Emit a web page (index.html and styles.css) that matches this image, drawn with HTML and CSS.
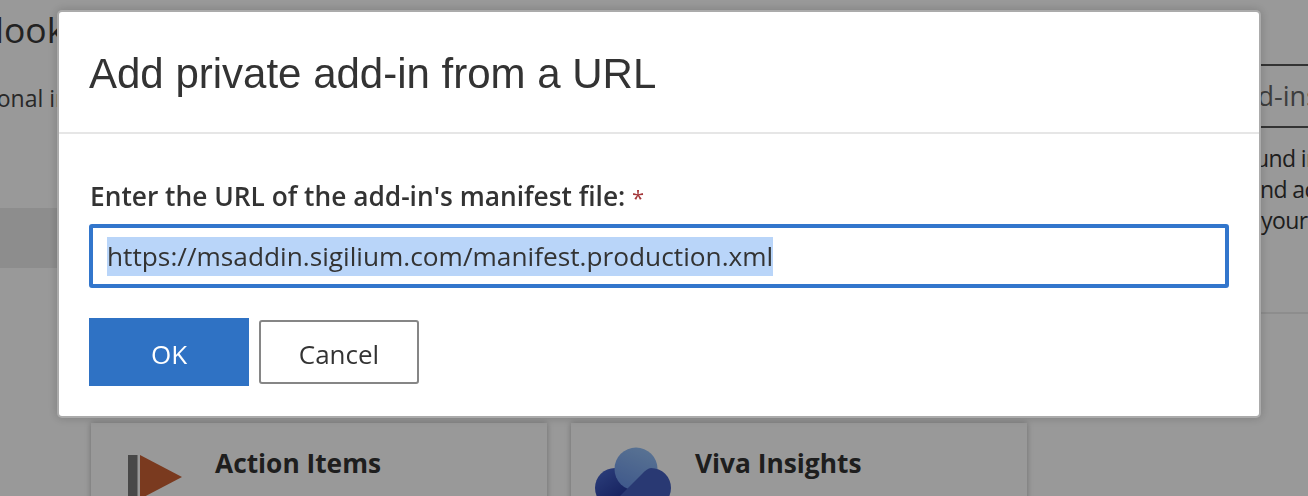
FILE: index.html
```html
<!DOCTYPE html>
<html lang="en">
<head>
<meta charset="utf-8">
<title>Add private add-in from a URL</title>
<link rel="stylesheet" href="styles.css">
</head>
<body>
<div class="page">
  <div class="top">
    <div class="intro">
      <h1 class="page-title">Outlook</h1>
      <p class="page-sub">additional info</p>
      <div class="band"></div>
    </div>
    <div class="side">
      <div class="tab">Add-ins</div>
      <p class="side-text"><span class="line line-a">und in</span><span class="line line-b">nd ac</span><span class="line line-c">your</span></p>
      <div class="side-rule"></div>
    </div>
  </div>
  <div class="cards">
    <div class="card">
      <svg class="card-icon" width="56" height="44" viewBox="0 0 56 44"><rect x="0" y="0" width="9.5" height="44" fill="#787878"/><path d="M12 0 L54 22 L12 44Z" fill="#cb6135"/></svg>
      <h2 class="card-title">Action Items</h2>
    </div>
    <div class="card">
      <svg class="card-icon" width="78" height="50" viewBox="0 0 78 50"><defs><linearGradient id="big" x1="0.7" y1="0" x2="0.3" y2="1"><stop offset="0" stop-color="#94bff5"/><stop offset="1" stop-color="#6a94e8"/></linearGradient><linearGradient id="left" x1="0.1" y1="0" x2="0.8" y2="1"><stop offset="0" stop-color="#4a69ce"/><stop offset="1" stop-color="#1a2a90"/></linearGradient></defs><circle cx="20" cy="41" r="20" fill="url(#left)"/><circle cx="41" cy="22" r="21.5" fill="url(#big)"/><path d="M24 50 L47 27 Q52 21.5 56 21 A20 20 0 0 1 56 61 L24 61Z" fill="#4560c0"/></svg>
      <h2 class="card-title">Viva Insights</h2>
    </div>
  </div>
</div>
<div class="overlay"></div>
<div class="dialog" role="dialog">
  <header class="dialog-head"><h2 class="dialog-title">Add private add-in from a URL</h2></header>
  <div class="dialog-body">
    <label class="field-label" for="url">Enter the URL of the add-in's manifest file: <span class="req">*</span></label>
    <div class="field"><span class="selected" id="url">https://msaddin.sigilium.com/manifest.production.xml</span></div>
    <div class="actions">
      <button class="btn btn-primary" type="button">OK</button>
      <button class="btn btn-default" type="button">Cancel</button>
    </div>
  </div>
</div>
</body>
</html>
```
FILE: styles.css
```css
* { box-sizing: border-box; }
html, body { margin: 0; height: 496px; overflow: hidden; background: #fff; }
body { font-family: "Open Sans", "Noto Sans", sans-serif; color: #333; }
.page { width: 1308px; height: 496px; overflow: hidden; }
.top { display: flex; justify-content: space-between; height: 400px; }
.intro { width: 400px; margin-left: -67px; padding-top: 3px; }
.page-title { margin: 0; font-size: 35.5px; line-height: 52px; font-weight: 400; color: #3a3a3a; }
.page-sub { margin: 27px 0 0; font-size: 23px; line-height: 32px; white-space: nowrap; color: #444; text-indent: 3px; }
.band { margin-top: 94px; height: 60px; background: #ececec; }
.side { width: 230px; padding-top: 64px; font-size: 23px; color: #333; }
.tab { height: 64px; border-top: 2px solid #555; border-bottom: 2px solid #555; line-height: 60px; font-size: 27px; color: #666; padding-left: 146px; white-space: nowrap; overflow: hidden; }
.side-text { margin: 15px 0 0; line-height: 31px; white-space: nowrap; color: #333; letter-spacing: -.6px; }
.line { display: block; }
.line-a { padding-left: 177px; }
.line-b { padding-left: 182px; }
.line-c { padding-left: 183px; }
.side-rule { margin-top: 76px; height: 2px; background: #ebebeb; }
.cards { display: flex; gap: 24px; padding: 23px 0 0 91px; }
.card { width: 456px; height: 120px; background: #fff; box-shadow: 0 0 6px rgba(0,0,0,.28); display: flex; }
.card-icon { flex: none; margin: 32px 0 0 37px; }
.card-title { margin: 0 0 0 31px; padding-top: 20px; font-size: 26.3px; line-height: 40px; font-weight: 700; color: #333; white-space: nowrap; }
.card:last-child .card-icon { margin-left: 24px; margin-top: 24px; }
.card:last-child .card-title { margin-left: 22px; }
.overlay { position: fixed; inset: 0; background: rgba(0,0,0,.4); }
.dialog { position: fixed; left: 59px; top: 12px; width: 1200px; height: 404px; background: #fff; border-radius: 3px; box-shadow: 0 0 0 2px #ababab, 0 0 10px 3px rgba(0,0,0,.16); }
.dialog-head { height: 122px; border-bottom: 2px solid #e6e6e6; padding: 32px 30px 0; }
.dialog-title { margin: 0; font-family: "Liberation Sans", Arial, sans-serif; font-weight: 400; font-size: 42px; line-height: 60px; color: #333; }
.dialog-body { padding: 46px 30px 0; }
.field-label { display: block; padding-left: 1px; font-size: 26.3px; line-height: 32px; font-weight: 600; color: #333; }
.req { color: #a4373a; font-weight: 400; font-size: 22px; }
.field { margin-top: 11px; height: 64px; border: 4px solid #3276cc; border-radius: 3px; padding: 9px 14px; font-size: 26.25px; line-height: 39px; }
.selected { background: #b9d5f9; color: #333; display: inline-block; white-space: nowrap; }
.actions { display: flex; align-items: center; gap: 10px; margin-top: 30px; }
.btn { font: inherit; font-size: 26px; padding: 3px 0 0; }
.btn-primary { width: 160px; height: 68px; border: 0; background: #2f72c4; color: #fff; }
.btn-default { width: 160px; height: 64px; background: #fff; border: 2px solid #868686; border-radius: 3px; color: #333; }
```
